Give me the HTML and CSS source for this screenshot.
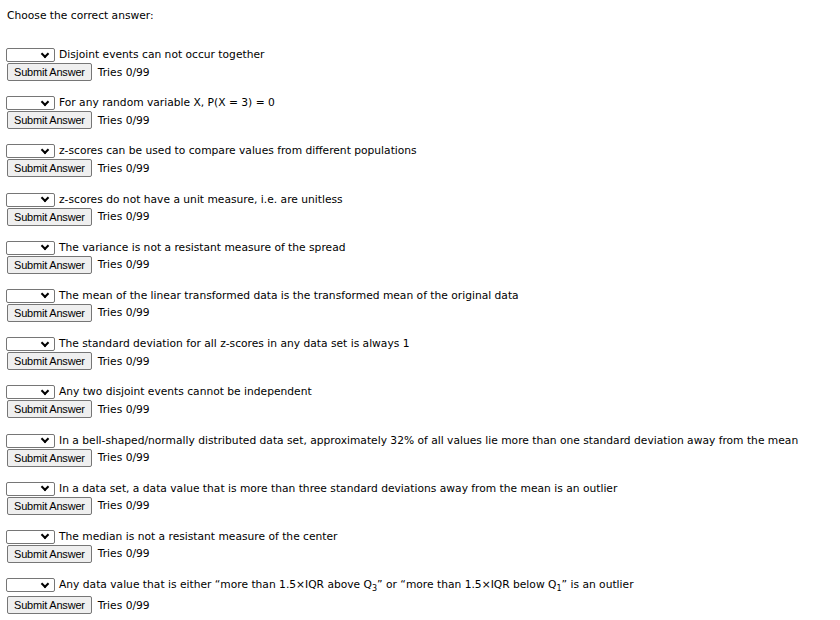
FILE: index.html
```html
<!DOCTYPE html>
<html>
<head>
<meta charset="utf-8">
<link rel="stylesheet" href="styles.css">
</head>
<body>
<div class="page">
  <p class="intro">Choose the correct answer:</p>
  <div class="list">
    <div class="item">
      <div class="qrow"><span class="sel"></span><span class="q">Disjoint events can not occur together</span></div>
      <div class="arow"><button class="btn">Submit Answer</button><span class="tries">Tries 0/99</span></div>
    </div>
    <div class="item">
      <div class="qrow"><span class="sel"></span><span class="q">For any random variable X, P(X = 3) = 0</span></div>
      <div class="arow"><button class="btn">Submit Answer</button><span class="tries">Tries 0/99</span></div>
    </div>
    <div class="item">
      <div class="qrow"><span class="sel"></span><span class="q">z-scores can be used to compare values from different populations</span></div>
      <div class="arow"><button class="btn">Submit Answer</button><span class="tries">Tries 0/99</span></div>
    </div>
    <div class="item">
      <div class="qrow"><span class="sel"></span><span class="q">z-scores do not have a unit measure, i.e. are unitless</span></div>
      <div class="arow"><button class="btn">Submit Answer</button><span class="tries">Tries 0/99</span></div>
    </div>
    <div class="item">
      <div class="qrow"><span class="sel"></span><span class="q">The variance is not a resistant measure of the spread</span></div>
      <div class="arow"><button class="btn">Submit Answer</button><span class="tries">Tries 0/99</span></div>
    </div>
    <div class="item">
      <div class="qrow"><span class="sel"></span><span class="q">The mean of the linear transformed data is the transformed mean of the original data</span></div>
      <div class="arow"><button class="btn">Submit Answer</button><span class="tries">Tries 0/99</span></div>
    </div>
    <div class="item">
      <div class="qrow"><span class="sel"></span><span class="q">The standard deviation for all z-scores in any data set is always 1</span></div>
      <div class="arow"><button class="btn">Submit Answer</button><span class="tries">Tries 0/99</span></div>
    </div>
    <div class="item">
      <div class="qrow"><span class="sel"></span><span class="q">Any two disjoint events cannot be independent</span></div>
      <div class="arow"><button class="btn">Submit Answer</button><span class="tries">Tries 0/99</span></div>
    </div>
    <div class="item">
      <div class="qrow"><span class="sel"></span><span class="q">In a bell-shaped/normally distributed data set, approximately 32% of all values lie more than one standard deviation away from the mean</span></div>
      <div class="arow"><button class="btn">Submit Answer</button><span class="tries">Tries 0/99</span></div>
    </div>
    <div class="item">
      <div class="qrow"><span class="sel"></span><span class="q">In a data set, a data value that is more than three standard deviations away from the mean is an outlier</span></div>
      <div class="arow"><button class="btn">Submit Answer</button><span class="tries">Tries 0/99</span></div>
    </div>
    <div class="item">
      <div class="qrow"><span class="sel"></span><span class="q">The median is not a resistant measure of the center</span></div>
      <div class="arow"><button class="btn">Submit Answer</button><span class="tries">Tries 0/99</span></div>
    </div>
    <div class="item last">
      <div class="qrow"><span class="sel"></span><span class="q">Any data value that is either “more than 1.5×IQR above Q<sub>3</sub>” or “more than 1.5×IQR below Q<sub>1</sub>” is an outlier</span></div>
      <div class="arow"><button class="btn">Submit Answer</button><span class="tries">Tries 0/99</span></div>
    </div>
  </div>
</div>
</body>
</html>
```
FILE: styles.css
```css
html, body { margin: 0; padding: 0; background: #fff; }
body {
  font-family: "DejaVu Sans", Verdana, sans-serif;
  font-size: 10.7px;
  color: #000;
}
.page { padding: 9px 7px 0 6px; }
.intro { margin: 0 0 24px 1px; line-height: 14px; }
.list { display: flex; flex-direction: column; gap: 14.2px; }
.item { display: flex; flex-direction: column; }
.qrow { display: flex; align-items: center; height: 16px; white-space: nowrap; }
.sel {
  box-sizing: border-box;
  width: 49px; height: 14px;
  border: 1px solid #767676;
  border-radius: 2px;
  background: #fff;
  position: relative;
  margin-right: 4px;
  flex: none;
}
.sel::after {
  content: "";
  position: absolute;
  right: 6px; top: 1.5px;
  width: 4px; height: 4px;
  border-right: 2px solid #000;
  border-bottom: 2px solid #000;
  transform: rotate(45deg);
}
.q { line-height: 14px; }
.q sub { font-size: 8px; line-height: 0; vertical-align: -3px; }
.arow { display: flex; align-items: center; height: 18px; }
.btn {
  box-sizing: border-box;
  height: 18px;
  margin: 0 6px 0 1px;
  padding: 0 6px;
  font-family: "Liberation Sans", Arial, sans-serif;
  font-size: 11px;
  letter-spacing: -0.2px;
  color: #000;
  background: #efefef;
  border: 1px solid #767676;
  border-radius: 2px;
}
.last .arow { margin-top: 3px; }
```
